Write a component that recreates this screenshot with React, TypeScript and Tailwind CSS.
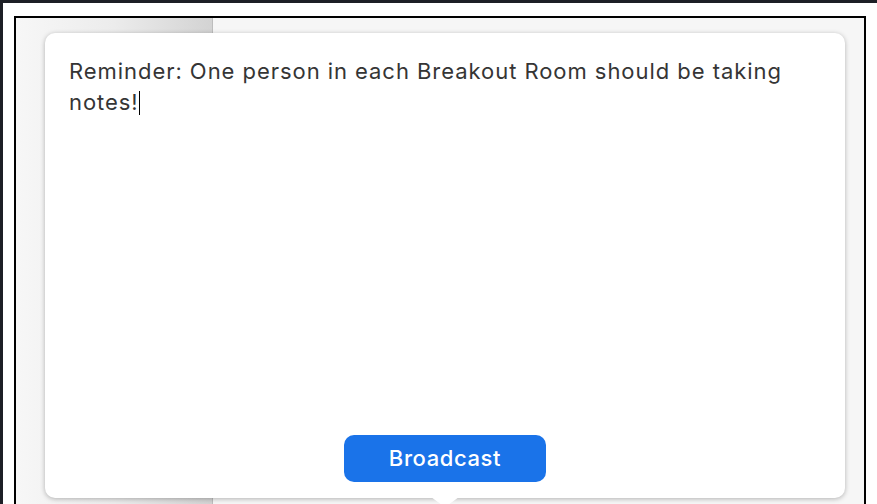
import React from "react";

export default function App() {
  return (
    <div className="w-[877px] h-[504px] overflow-hidden bg-[#1d1f26] pt-[3px] pl-[3px] flex">
      <div className="flex-1 bg-white pt-[13px] pl-[11px] pr-[11px] flex">
        <div className="relative flex-1 flex border-2 border-b-0 border-black">
          {/* sidebar */}
          <div className="w-[197px] bg-gradient-to-r from-[#f7f7f7] via-[#ececec] to-[#d3d3d3] border-r border-[#bdbdbd]" />
          {/* main area */}
          <div className="flex-1 bg-[#f6f6f6]" />

          {/* popover */}
          <div
            className="absolute left-[29px] top-[15px] w-[800px] h-[465px] bg-white rounded-[10px] shadow-[0_1px_5px_rgba(0,0,0,0.28)] flex flex-col px-6 pt-[23px] pb-[16px]"
            style={{ fontFamily: "Inter, 'Noto Sans', sans-serif" }}
          >
            <p className="-mr-1 text-[22px] leading-[31px] text-[#353535] tracking-[0.95px]">
              Reminder: One person in each Breakout Room should be taking notes!
              <span className="inline-block w-[1.5px] h-[24px] bg-black align-[-5px]" />
            </p>
            <div className="mt-auto flex justify-center">
              <button className="w-[202px] h-[47px] rounded-[10px] bg-[#1a73e9] text-white text-[22px] font-medium tracking-[0.6px]">
                Broadcast
              </button>
            </div>
            {/* tail */}
            <svg
              className="absolute left-1/2 -translate-x-1/2 -bottom-[8px]"
              width="28"
              height="9"
              viewBox="0 0 28 9"
            >
              <path d="M0 0 L11 8 Q14 9.5 17 8 L28 0 Z" fill="#ffffff" />
            </svg>
          </div>
        </div>
      </div>
    </div>
  );
}
